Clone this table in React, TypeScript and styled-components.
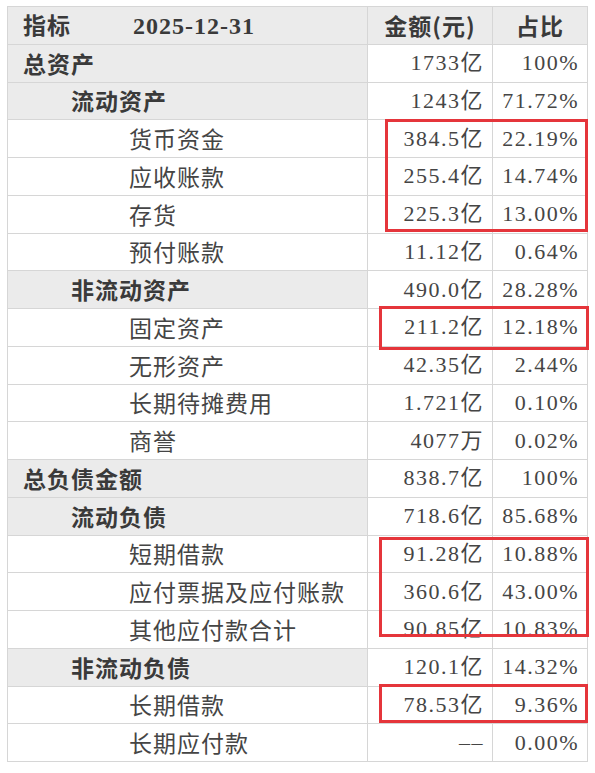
import React from "react";
import styled, { createGlobalStyle } from "styled-components";

const GlobalStyle = createGlobalStyle`
  body {
    margin: 0;
    background: #ffffff;
  }
`;

const Page = styled.div`
  padding: 6px 0 0 7px;
`;

const Sheet = styled.div`
  position: relative;
  width: 580px;
`;

const Table = styled.table`
  width: 580px;
  border-collapse: collapse;
  table-layout: fixed;
  color: #404040;
`;

const Col = styled.col<{ $w: number }>`
  width: ${(p) => p.$w}px;
`;

const Row = styled.tr`
  height: 37.75px;
`;

const Cell = styled.td<{ $shaded?: boolean }>`
  border: 1px solid #d6d6d6;
  padding: 0;
  vertical-align: middle;
  line-height: 1;
  white-space: nowrap;
  background: ${(p) => (p.$shaded ? "#ebebeb" : "#ffffff")};
`;

const HeadCell = styled(Cell)<{ $align?: string }>`
  font-family: "Noto Sans CJK SC", sans-serif;
  font-weight: 700;
  font-size: 23px;
  letter-spacing: 1px;
  color: #3a3a3a;
  text-align: ${(p) => p.$align || "left"};
  padding-left: ${(p) => (p.$align ? "0" : "15px")};
`;

const DateText = styled.span`
  font-family: "Liberation Serif", serif;
  font-weight: 700;
  font-size: 24px;
  letter-spacing: 1px;
  margin-left: 62px;
`;

const LabelCell = styled(Cell)<{ $level: number; $group?: boolean }>`
  font-family: "Noto Sans CJK SC", sans-serif;
  font-size: 23px;
  letter-spacing: 1px;
  font-weight: ${(p) => (p.$group ? 700 : 400)};
  color: ${(p) => (p.$group ? "#3a3a3a" : "#454545")};
  padding-left: ${(p) => [15, 63, 121][p.$level]}px;
`;

const ValueCell = styled(Cell)`
  font-family: "Liberation Serif", "Noto Sans CJK SC", serif;
  font-size: 22px;
  letter-spacing: 1.5px;
  color: #454545;
  text-align: right;
  padding-right: 8px;
`;

const Mark = styled.div`
  position: absolute;
  box-sizing: border-box;
  border: 3px solid #e5353b;
  pointer-events: none;
`;

type Item = {
  name: string;
  amount: string;
  ratio: string;
  level: number;
  group?: boolean;
};

const items: Item[] = [
  { name: "总资产", amount: "1733亿", ratio: "100%", level: 0, group: true },
  { name: "流动资产", amount: "1243亿", ratio: "71.72%", level: 1, group: true },
  { name: "货币资金", amount: "384.5亿", ratio: "22.19%", level: 2 },
  { name: "应收账款", amount: "255.4亿", ratio: "14.74%", level: 2 },
  { name: "存货", amount: "225.3亿", ratio: "13.00%", level: 2 },
  { name: "预付账款", amount: "11.12亿", ratio: "0.64%", level: 2 },
  { name: "非流动资产", amount: "490.0亿", ratio: "28.28%", level: 1, group: true },
  { name: "固定资产", amount: "211.2亿", ratio: "12.18%", level: 2 },
  { name: "无形资产", amount: "42.35亿", ratio: "2.44%", level: 2 },
  { name: "长期待摊费用", amount: "1.721亿", ratio: "0.10%", level: 2 },
  { name: "商誉", amount: "4077万", ratio: "0.02%", level: 2 },
  { name: "总负债金额", amount: "838.7亿", ratio: "100%", level: 0, group: true },
  { name: "流动负债", amount: "718.6亿", ratio: "85.68%", level: 1, group: true },
  { name: "短期借款", amount: "91.28亿", ratio: "10.88%", level: 2 },
  { name: "应付票据及应付账款", amount: "360.6亿", ratio: "43.00%", level: 2 },
  { name: "其他应付款合计", amount: "90.85亿", ratio: "10.83%", level: 2 },
  { name: "非流动负债", amount: "120.1亿", ratio: "14.32%", level: 1, group: true },
  { name: "长期借款", amount: "78.53亿", ratio: "9.36%", level: 2 },
  { name: "长期应付款", amount: "––", ratio: "0.00%", level: 2 },
];

// hand-drawn highlight boxes, in table coordinates
const marks = [
  { left: 378, top: 113, width: 203, height: 113 },
  { left: 372, top: 300, width: 210, height: 44 },
  { left: 372, top: 531, width: 210, height: 100 },
  { left: 372, top: 678, width: 209, height: 39 },
];

const App: React.FC = () => {
  return (
    <Page>
      <GlobalStyle />
      <Sheet>
        <Table>
          <colgroup>
            <Col $w={360} />
            <Col $w={125} />
            <Col $w={95} />
          </colgroup>
          <tbody>
            <Row>
              <HeadCell $shaded>
                指标
                <DateText>2025-12-31</DateText>
              </HeadCell>
              <HeadCell $shaded $align="center">
                金额(元)
              </HeadCell>
              <HeadCell $shaded $align="center">
                占比
              </HeadCell>
            </Row>
            {items.map((it) => (
              <Row key={it.name}>
                <LabelCell $shaded={it.group} $group={it.group} $level={it.level}>
                  {it.name}
                </LabelCell>
                <ValueCell>{it.amount}</ValueCell>
                <ValueCell>{it.ratio}</ValueCell>
              </Row>
            ))}
          </tbody>
        </Table>
        {marks.map((m, i) => (
          <Mark
            key={i}
            style={{ left: m.left, top: m.top, width: m.width, height: m.height }}
          />
        ))}
      </Sheet>
    </Page>
  );
};

export default App;
